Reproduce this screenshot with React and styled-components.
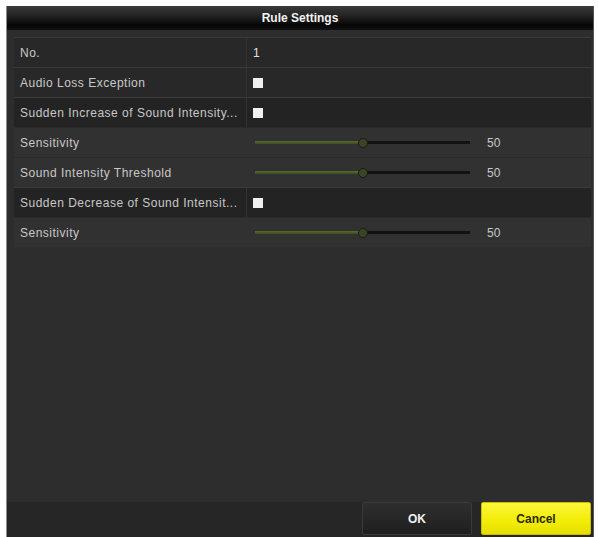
import React from "react";
import styled, { createGlobalStyle } from "styled-components";

const Global = createGlobalStyle`
  html, body { margin: 0; padding: 0; background: #ffffff; }
  body { font-family: "Liberation Sans", Arial, sans-serif; }
`;

const Window = styled.div`
  margin: 6px 4px 0 6px;
  width: 588px;
  height: 531px;
  background: #2d2d2d;
  display: flex;
  flex-direction: column;
  border-left: 1px solid #8a8a8a;
  border-right: 1px solid #555;
  box-sizing: border-box;
`;

const TitleBar = styled.div`
  height: 24px;
  flex: none;
  background: linear-gradient(#3a3a3a 0%, #202020 45%, #060606 80%, #111 100%);
  color: #f2f2f2;
  font-size: 12px;
  font-weight: bold;
  display: flex;
  align-items: center;
  justify-content: center;
`;

const Content = styled.div`
  flex: 1;
  padding: 7px 2px 0 7px;
  display: flex;
  flex-direction: column;
`;

const Row = styled.div`
  height: 30px;
  box-sizing: border-box;
  display: grid;
  grid-template-columns: 233px 1fr;
  background: ${(p) => (p.$dark ? "#232323" : p.$sub ? "#313131" : "#282828")};
  border-top: 1px solid ${(p) => (p.$sub ? "#2a2a2a" : "#3a3a3a")};
`;

const Label = styled.div`
  display: flex;
  align-items: center;
  padding-left: 6px;
  color: #c8c8c8;
  font-size: 12px;
  letter-spacing: 0.5px;
  white-space: nowrap;
  overflow: hidden;
  border-right: 1px solid ${(p) => (p.$sub ? "transparent" : "#333")};
`;

const Value = styled.div`
  display: flex;
  align-items: center;
  padding-left: 6px;
  color: #e0e0e0;
  font-size: 12px;
`;

const Check = styled.span`
  width: 10px;
  height: 10px;
  background: #f0f0f0;
  display: inline-block;
`;

const Track = styled.div`
  position: relative;
  width: 215px;
  height: 3px;
  margin-left: 2px;
  background: #121212;
`;

const Fill = styled.div`
  height: 100%;
  background: linear-gradient(#5a6a2e, #3e4a20);
`;

const Thumb = styled.span`
  position: absolute;
  top: 50%;
  width: 10px;
  height: 10px;
  margin: -5px 0 0 -5px;
  border-radius: 50%;
  background: #3a4521;
  border: 1px solid #1b1b1b;
  box-sizing: border-box;
`;

const Num = styled.span`
  margin-left: 17px;
  color: #c8c8c8;
  font-size: 12px;
`;

const Footer = styled.div`
  height: 35px;
  flex: none;
  background: #262626;
  display: flex;
  justify-content: flex-end;
  align-items: flex-start;
  gap: 9px;
  padding: 0 2px 0 0;
  box-sizing: border-box;
`;

const Button = styled.button`
  width: 110px;
  height: 33px;
  font-family: "Liberation Sans", Arial, sans-serif;
  font-size: 12px;
  font-weight: bold;
  border-radius: 2px;
  cursor: pointer;
  color: ${(p) => (p.$primary ? "#2a2a00" : "#f0f0f0")};
  background: ${(p) =>
    p.$primary
      ? "linear-gradient(#fbf63a, #f2ec06 60%, #e6de00)"
      : "linear-gradient(#2e2e2e, #1f1f1f)"};
  border: 1px solid ${(p) => (p.$primary ? "#c8c000" : "#3a3a3a")};
`;

function Slider({ value }) {
  const pct = `${value}%`;
  return (
    <Value>
      <Track>
        <Fill style={{ width: pct }} />
        <Thumb style={{ left: pct }} />
      </Track>
      <Num>{value}</Num>
    </Value>
  );
}

export default function App() {
  return (
    <>
      <Global />
      <Window>
        <TitleBar>Rule Settings</TitleBar>
        <Content>
          <Row>
            <Label>No.</Label>
            <Value>1</Value>
          </Row>
          <Row>
            <Label>Audio Loss Exception</Label>
            <Value><Check /></Value>
          </Row>
          <Row $dark>
            <Label>Sudden Increase of Sound Intensity...</Label>
            <Value><Check /></Value>
          </Row>
          <Row $sub>
            <Label $sub>Sensitivity</Label>
            <Slider value={50} />
          </Row>
          <Row $sub>
            <Label $sub>Sound Intensity Threshold</Label>
            <Slider value={50} />
          </Row>
          <Row $dark>
            <Label>Sudden Decrease of Sound Intensit...</Label>
            <Value><Check /></Value>
          </Row>
          <Row $sub>
            <Label $sub>Sensitivity</Label>
            <Slider value={50} />
          </Row>
        </Content>
        <Footer>
          <Button>OK</Button>
          <Button $primary>Cancel</Button>
        </Footer>
      </Window>
    </>
  );
}
